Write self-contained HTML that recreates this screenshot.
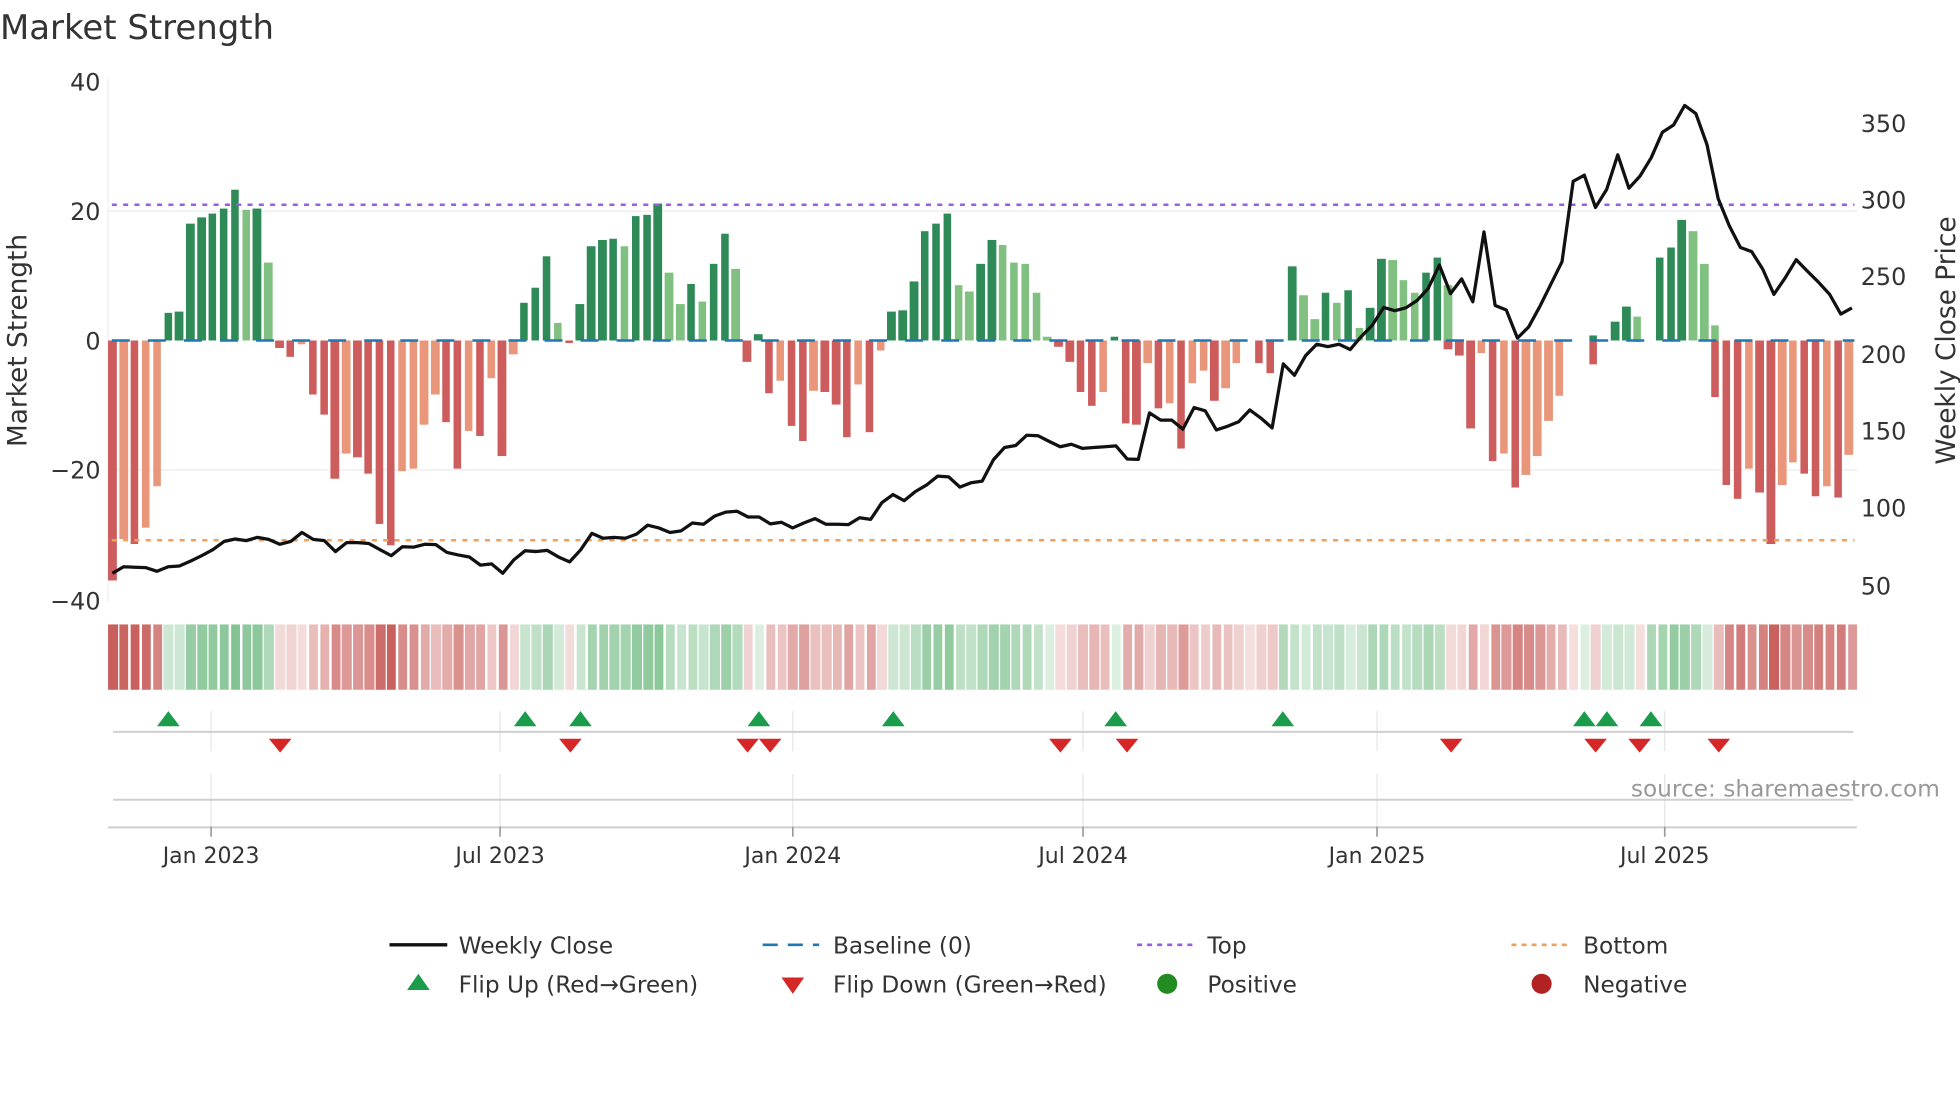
<!DOCTYPE html>
<html><head><meta charset="utf-8"><style>
html,body{margin:0;padding:0;background:#fff;overflow:hidden;width:1960px;height:1102px;}
#w{position:absolute;left:0;top:0;width:1560px;height:877.1px;transform:scale(1.25641);transform-origin:0 0;}
svg{position:absolute;left:0;top:0;font-family:"DejaVu Sans","Liberation Sans",sans-serif;}
.row{position:absolute;left:86.3px;display:flex;gap:2.475px;}
.row i{display:block;width:6.4px;flex:none;}
#top{top:0;height:271px;align-items:flex-end;}
#bot{top:271px;height:210px;align-items:flex-start;}
.a{background:#2e8b57}.b{background:#80c080}.c{background:#cd5c5c}.d{background:#e9967a}
#heat{position:absolute;left:86px;top:497px;height:52px;display:flex;gap:1.375px;}
#heat b{display:block;width:7.5px;height:52px;flex:none;}
.g{background:rgb(95,178,115)}.r{background:rgb(200,95,92)}
</style></head><body><div id="w">
<svg width="1560" height="877.1" viewBox="0 0 1560 877.1" xmlns="http://www.w3.org/2000/svg">
<text x="0" y="31" font-size="27" fill="#333">Market Strength</text>
<line x1="86" y1="168" x2="1478" y2="168" stroke="#ececec" stroke-width="1"/>
<line x1="86" y1="374" x2="1478" y2="374" stroke="#ececec" stroke-width="1"/>
<line x1="86" y1="62" x2="86" y2="480" stroke="#eeeeee" stroke-width="1"/>
<g font-size="19" fill="#333" text-anchor="end">
<text x="80" y="72">40</text><text x="80" y="175">20</text><text x="80" y="278">0</text>
<text x="80" y="381">−20</text><text x="80" y="485">−40</text>
</g>
<g font-size="19" fill="#333">
<text x="1481" y="105">350</text><text x="1481" y="166">300</text><text x="1481" y="227">250</text>
<text x="1481" y="289">200</text><text x="1481" y="350">150</text><text x="1481" y="411">100</text>
<text x="1481" y="473">50</text>
</g>
<text transform="translate(21,271) rotate(-90)" font-size="21" fill="#333" text-anchor="middle">Market Strength</text>
<text transform="translate(1556,271) rotate(-90)" font-size="21" fill="#333" text-anchor="middle">Weekly Close Price</text>
<g stroke="#e6e6e6" stroke-width="1">
<line x1="168" y1="566" x2="168" y2="598"/><line x1="398" y1="566" x2="398" y2="598"/>
<line x1="631" y1="566" x2="631" y2="598"/><line x1="862" y1="566" x2="862" y2="598"/>
<line x1="1096" y1="566" x2="1096" y2="598"/><line x1="1325" y1="566" x2="1325" y2="598"/>
<line x1="168" y1="616" x2="168" y2="658"/><line x1="398" y1="616" x2="398" y2="658"/>
<line x1="631" y1="616" x2="631" y2="658"/><line x1="862" y1="616" x2="862" y2="658"/>
<line x1="1096" y1="616" x2="1096" y2="658"/><line x1="1325" y1="616" x2="1325" y2="658"/>
</g>
<line x1="90" y1="582.5" x2="1475" y2="582.5" stroke="#cfcfcf" stroke-width="1.6"/>
<line x1="90" y1="636.5" x2="1475" y2="636.5" stroke="#cfcfcf" stroke-width="1.6"/>
<line x1="86" y1="658.5" x2="1478" y2="658.5" stroke="#cfcfcf" stroke-width="1.6"/>
<g stroke="#999" stroke-width="1.3">
<line x1="168" y1="658" x2="168" y2="666"/><line x1="398" y1="658" x2="398" y2="666"/>
<line x1="631" y1="658" x2="631" y2="666"/><line x1="862" y1="658" x2="862" y2="666"/>
<line x1="1096" y1="658" x2="1096" y2="666"/><line x1="1325" y1="658" x2="1325" y2="666"/>
</g>
<g fill="#1a9c4a">
<polygon points="125,578 143,578 134,566"/><polygon points="409,578 427,578 418,566"/>
<polygon points="453,578 471,578 462,566"/><polygon points="595,578 613,578 604,566"/>
<polygon points="702,578 720,578 711,566"/><polygon points="879,578 897,578 888,566"/>
<polygon points="1012,578 1030,578 1021,566"/><polygon points="1252,578 1270,578 1261,566"/>
<polygon points="1270,578 1288,578 1279,566"/><polygon points="1305,578 1323,578 1314,566"/>
</g>
<g fill="#d62728">
<polygon points="214,588 232,588 223,599"/><polygon points="445,588 463,588 454,599"/>
<polygon points="586,588 604,588 595,599"/><polygon points="604,588 622,588 613,599"/>
<polygon points="835,588 853,588 844,599"/><polygon points="888,588 906,588 897,599"/>
<polygon points="1146,588 1164,588 1155,599"/><polygon points="1261,588 1279,588 1270,599"/>
<polygon points="1296,588 1314,588 1305,599"/><polygon points="1359,588 1377,588 1368,599"/>
</g>
<text x="1544" y="634" font-size="18.5" fill="#999" text-anchor="end">source: sharemaestro.com</text>
<g font-size="17.5" fill="#333" text-anchor="middle">
<text x="168" y="687">Jan 2023</text><text x="398" y="687">Jul 2023</text><text x="631" y="687">Jan 2024</text>
<text x="862" y="687">Jul 2024</text><text x="1096" y="687">Jan 2025</text><text x="1325" y="687">Jul 2025</text>
</g>
<g font-size="18.5" fill="#333">
<line x1="310" y1="752" x2="356" y2="752" stroke="#111" stroke-width="2.6"/>
<text x="365" y="759">Weekly Close</text>
<line x1="607" y1="752" x2="652" y2="752" stroke="#1f77b4" stroke-width="2" stroke-dasharray="12,8"/>
<text x="663" y="759">Baseline (0)</text>
<line x1="905" y1="752" x2="950" y2="752" stroke="#9b5de5" stroke-width="2" stroke-dasharray="4,4"/>
<text x="961" y="759">Top</text>
<line x1="1203" y1="752" x2="1248" y2="752" stroke="#f0a05a" stroke-width="2" stroke-dasharray="4,4"/>
<text x="1260" y="759">Bottom</text>
<polygon points="324,788 342,788 333,775" fill="#1a9c4a"/>
<text x="365" y="790">Flip Up (Red→Green)</text>
<polygon points="622,778 640,778 631,791" fill="#d62728"/>
<text x="663" y="790">Flip Down (Green→Red)</text>
<circle cx="929" cy="783" r="8" fill="#228b22"/>
<text x="961" y="790">Positive</text>
<circle cx="1227" cy="783" r="8" fill="#b22222"/>
<text x="1260" y="790">Negative</text>
</g>
</svg>
<div class="row" id="top"><i></i><i></i><i></i><i></i><i></i><i class=a style="height:22.1px"></i><i class=a style="height:23.2px"></i><i class=a style="height:92.7px"></i><i class=a style="height:97.9px"></i><i class=a style="height:101.5px"></i><i class=a style="height:105.1px"></i><i class=a style="height:120px"></i><i class=b style="height:104.5px"></i><i class=a style="height:105.1px"></i><i class=b style="height:62.3px"></i><i></i><i></i><i></i><i></i><i></i><i></i><i></i><i></i><i></i><i></i><i></i><i></i><i></i><i></i><i></i><i></i><i></i><i></i><i></i><i></i><i></i><i></i><i class=a style="height:30.4px"></i><i class=a style="height:41.7px"></i><i class=a style="height:67px"></i><i class=b style="height:14.4px"></i><i></i><i class=a style="height:29.4px"></i><i class=a style="height:75.2px"></i><i class=a style="height:79.8px"></i><i class=a style="height:80.9px"></i><i class=b style="height:75.2px"></i><i class=a style="height:98.9px"></i><i class=a style="height:99.9px"></i><i class=a style="height:108.7px"></i><i class=b style="height:53.6px"></i><i class=b style="height:29.4px"></i><i class=a style="height:45.3px"></i><i class=b style="height:31.4px"></i><i class=a style="height:60.8px"></i><i class=a style="height:85px"></i><i class=b style="height:56.7px"></i><i></i><i class=a style="height:4.6px"></i><i></i><i></i><i></i><i></i><i></i><i></i><i></i><i></i><i></i><i></i><i></i><i class=a style="height:23.2px"></i><i class=a style="height:23.7px"></i><i class=a style="height:47.4px"></i><i class=a style="height:87px"></i><i class=a style="height:93.2px"></i><i class=a style="height:101.5px"></i><i class=b style="height:43.8px"></i><i class=b style="height:39.1px"></i><i class=a style="height:61.3px"></i><i class=a style="height:80.3px"></i><i class=b style="height:75.7px"></i><i class=b style="height:62.3px"></i><i class=b style="height:60.8px"></i><i class=b style="height:38.1px"></i><i class=b style="height:3.1px"></i><i></i><i></i><i></i><i></i><i></i><i class=a style="height:2.6px"></i><i></i><i></i><i></i><i></i><i></i><i></i><i></i><i></i><i></i><i></i><i></i><i></i><i></i><i></i><i></i><i class=a style="height:58.7px"></i><i class=b style="height:36.1px"></i><i class=b style="height:17px"></i><i class=a style="height:38.1px"></i><i class=b style="height:30.4px"></i><i class=a style="height:40.2px"></i><i class=b style="height:10.3px"></i><i class=a style="height:25.8px"></i><i class=a style="height:65.4px"></i><i class=b style="height:63.9px"></i><i class=b style="height:47.9px"></i><i class=b style="height:37.6px"></i><i class=a style="height:54.1px"></i><i class=a style="height:66.4px"></i><i class=b style="height:44.3px"></i><i></i><i></i><i></i><i></i><i></i><i></i><i></i><i></i><i></i><i></i><i></i><i></i><i class=a style="height:4.1px"></i><i></i><i class=a style="height:14.9px"></i><i class=a style="height:27.3px"></i><i class=b style="height:19.1px"></i><i></i><i class=a style="height:66.4px"></i><i class=a style="height:73.6px"></i><i class=a style="height:95.8px"></i><i class=b style="height:87px"></i><i class=b style="height:61.3px"></i><i class=b style="height:11.8px"></i><i></i><i></i><i></i><i></i><i></i><i></i><i></i><i></i><i></i><i></i><i></i><i></i><i></i></div>
<div class="row" id="bot"><i class=c style="height:190.6px"></i><i class=d style="height:157.6px"></i><i class=c style="height:162.2px"></i><i class=d style="height:148.8px"></i><i class=d style="height:116.4px"></i><i></i><i></i><i></i><i></i><i></i><i></i><i></i><i></i><i></i><i></i><i class=c style="height:5.7px"></i><i class=c style="height:13.4px"></i><i class=d style="height:3.1px"></i><i class=c style="height:42.7px"></i><i class=c style="height:58.7px"></i><i class=c style="height:109.7px"></i><i class=d style="height:89.6px"></i><i class=c style="height:92.7px"></i><i class=c style="height:105.6px"></i><i class=c style="height:145.7px"></i><i class=c style="height:163.3px"></i><i class=d style="height:104px"></i><i class=d style="height:101.5px"></i><i class=d style="height:67px"></i><i class=d style="height:43.3px"></i><i class=c style="height:65.4px"></i><i class=c style="height:101.5px"></i><i class=d style="height:72.1px"></i><i class=c style="height:75.7px"></i><i class=d style="height:30.4px"></i><i class=c style="height:91.7px"></i><i class=d style="height:11.3px"></i><i></i><i></i><i></i><i></i><i class=c style="height:1.5px"></i><i></i><i></i><i></i><i></i><i></i><i></i><i></i><i></i><i></i><i></i><i></i><i></i><i></i><i></i><i></i><i class=c style="height:17px"></i><i></i><i class=c style="height:41.7px"></i><i class=d style="height:32.4px"></i><i class=c style="height:68px"></i><i class=c style="height:79.8px"></i><i class=d style="height:39.7px"></i><i class=c style="height:41.2px"></i><i class=c style="height:50.5px"></i><i class=c style="height:76.7px"></i><i class=d style="height:34.5px"></i><i class=c style="height:73.1px"></i><i class=d style="height:7.7px"></i><i></i><i></i><i></i><i></i><i></i><i></i><i></i><i></i><i></i><i></i><i></i><i></i><i></i><i></i><i></i><i class=c style="height:4.6px"></i><i class=c style="height:17px"></i><i class=c style="height:40.7px"></i><i class=c style="height:51.5px"></i><i class=d style="height:40.7px"></i><i></i><i class=c style="height:65.9px"></i><i class=c style="height:67px"></i><i class=d style="height:18px"></i><i class=c style="height:54.1px"></i><i class=d style="height:50px"></i><i class=c style="height:86px"></i><i class=d style="height:34px"></i><i class=d style="height:24.2px"></i><i class=c style="height:47.9px"></i><i class=d style="height:37.6px"></i><i class=d style="height:17.5px"></i><i></i><i class=c style="height:18px"></i><i class=c style="height:26.3px"></i><i></i><i></i><i></i><i></i><i></i><i></i><i></i><i></i><i></i><i></i><i></i><i></i><i></i><i></i><i></i><i class=c style="height:6.7px"></i><i class=c style="height:11.8px"></i><i class=c style="height:70px"></i><i class=d style="height:9.8px"></i><i class=c style="height:95.8px"></i><i class=d style="height:90.1px"></i><i class=c style="height:116.9px"></i><i class=d style="height:107.1px"></i><i class=d style="height:91.7px"></i><i class=d style="height:63.9px"></i><i class=d style="height:44.3px"></i><i></i><i></i><i class=c style="height:18.5px"></i><i></i><i></i><i></i><i class=c style="height:0.5px"></i><i></i><i></i><i></i><i></i><i></i><i></i><i class=c style="height:45.3px"></i><i class=c style="height:114.8px"></i><i class=c style="height:125.7px"></i><i class=d style="height:101.5px"></i><i class=c style="height:121px"></i><i class=c style="height:162.2px"></i><i class=d style="height:115.4px"></i><i class=d style="height:96.8px"></i><i class=c style="height:106.1px"></i><i class=c style="height:123.6px"></i><i class=d style="height:116.4px"></i><i class=c style="height:124.6px"></i><i class=d style="height:91.2px"></i></div>
<div id="heat"><b class=r style="opacity:1"></b><b class=r style="opacity:.97"></b><b class=r style="opacity:.99"></b><b class=r style="opacity:.92"></b><b class=r style="opacity:.77"></b><b class=g style="opacity:.31"></b><b class=g style="opacity:.31"></b><b class=g style="opacity:.65"></b><b class=g style="opacity:.68"></b><b class=g style="opacity:.69"></b><b class=g style="opacity:.71"></b><b class=g style="opacity:.78"></b><b class=g style="opacity:.71"></b><b class=g style="opacity:.71"></b><b class=g style="opacity:.5"></b><b class=r style="opacity:.23"></b><b class=r style="opacity:.27"></b><b class=r style="opacity:.22"></b><b class=r style="opacity:.41"></b><b class=r style="opacity:.49"></b><b class=r style="opacity:.73"></b><b class=r style="opacity:.64"></b><b class=r style="opacity:.65"></b><b class=r style="opacity:.71"></b><b class=r style="opacity:.91"></b><b class=r style="opacity:.99"></b><b class=r style="opacity:.71"></b><b class=r style="opacity:.69"></b><b class=r style="opacity:.53"></b><b class=r style="opacity:.41"></b><b class=r style="opacity:.52"></b><b class=r style="opacity:.69"></b><b class=r style="opacity:.55"></b><b class=r style="opacity:.57"></b><b class=r style="opacity:.35"></b><b class=r style="opacity:.65"></b><b class=r style="opacity:.26"></b><b class=g style="opacity:.35"></b><b class=g style="opacity:.4"></b><b class=g style="opacity:.53"></b><b class=g style="opacity:.27"></b><b class=r style="opacity:.21"></b><b class=g style="opacity:.34"></b><b class=g style="opacity:.57"></b><b class=g style="opacity:.59"></b><b class=g style="opacity:.59"></b><b class=g style="opacity:.57"></b><b class=g style="opacity:.68"></b><b class=g style="opacity:.69"></b><b class=g style="opacity:.73"></b><b class=g style="opacity:.46"></b><b class=g style="opacity:.34"></b><b class=g style="opacity:.42"></b><b class=g style="opacity:.35"></b><b class=g style="opacity:.5"></b><b class=g style="opacity:.61"></b><b class=g style="opacity:.48"></b><b class=r style="opacity:.28"></b><b class=g style="opacity:.22"></b><b class=r style="opacity:.4"></b><b class=r style="opacity:.36"></b><b class=r style="opacity:.53"></b><b class=r style="opacity:.59"></b><b class=r style="opacity:.39"></b><b class=r style="opacity:.4"></b><b class=r style="opacity:.45"></b><b class=r style="opacity:.57"></b><b class=r style="opacity:.37"></b><b class=r style="opacity:.56"></b><b class=r style="opacity:.24"></b><b class=g style="opacity:.31"></b><b class=g style="opacity:.32"></b><b class=g style="opacity:.43"></b><b class=g style="opacity:.62"></b><b class=g style="opacity:.65"></b><b class=g style="opacity:.69"></b><b class=g style="opacity:.41"></b><b class=g style="opacity:.39"></b><b class=g style="opacity:.5"></b><b class=g style="opacity:.59"></b><b class=g style="opacity:.57"></b><b class=g style="opacity:.5"></b><b class=g style="opacity:.5"></b><b class=g style="opacity:.39"></b><b class=g style="opacity:.22"></b><b class=r style="opacity:.22"></b><b class=r style="opacity:.28"></b><b class=r style="opacity:.4"></b><b class=r style="opacity:.45"></b><b class=r style="opacity:.4"></b><b class=g style="opacity:.21"></b><b class=r style="opacity:.52"></b><b class=r style="opacity:.53"></b><b class=r style="opacity:.29"></b><b class=r style="opacity:.46"></b><b class=r style="opacity:.44"></b><b class=r style="opacity:.62"></b><b class=r style="opacity:.37"></b><b class=r style="opacity:.32"></b><b class=r style="opacity:.43"></b><b class=r style="opacity:.38"></b><b class=r style="opacity:.29"></b><b class=r style="opacity:.2"></b><b class=r style="opacity:.29"></b><b class=r style="opacity:.33"></b><b class=g style="opacity:.49"></b><b class=g style="opacity:.38"></b><b class=g style="opacity:.28"></b><b class=g style="opacity:.39"></b><b class=g style="opacity:.35"></b><b class=g style="opacity:.4"></b><b class=g style="opacity:.25"></b><b class=g style="opacity:.33"></b><b class=g style="opacity:.52"></b><b class=g style="opacity:.51"></b><b class=g style="opacity:.43"></b><b class=g style="opacity:.38"></b><b class=g style="opacity:.46"></b><b class=g style="opacity:.52"></b><b class=g style="opacity:.42"></b><b class=r style="opacity:.23"></b><b class=r style="opacity:.26"></b><b class=r style="opacity:.54"></b><b class=r style="opacity:.25"></b><b class=r style="opacity:.67"></b><b class=r style="opacity:.64"></b><b class=r style="opacity:.77"></b><b class=r style="opacity:.72"></b><b class=r style="opacity:.65"></b><b class=r style="opacity:.51"></b><b class=r style="opacity:.42"></b><b class=r style="opacity:.2"></b><b class=g style="opacity:.22"></b><b class=r style="opacity:.29"></b><b class=g style="opacity:.27"></b><b class=g style="opacity:.33"></b><b class=g style="opacity:.29"></b><b class=r style="opacity:.2"></b><b class=g style="opacity:.52"></b><b class=g style="opacity:.56"></b><b class=g style="opacity:.67"></b><b class=g style="opacity:.62"></b><b class=g style="opacity:.5"></b><b class=g style="opacity:.26"></b><b class=r style="opacity:.42"></b><b class=r style="opacity:.76"></b><b class=r style="opacity:.81"></b><b class=r style="opacity:.69"></b><b class=r style="opacity:.79"></b><b class=r style="opacity:.99"></b><b class=r style="opacity:.76"></b><b class=r style="opacity:.67"></b><b class=r style="opacity:.72"></b><b class=r style="opacity:.8"></b><b class=r style="opacity:.77"></b><b class=r style="opacity:.81"></b><b class=r style="opacity:.64"></b></div>
<svg width="1560" height="877.1" viewBox="0 0 1560 877.1" xmlns="http://www.w3.org/2000/svg" style="pointer-events:none">
<line x1="89" y1="271" x2="1476" y2="271" stroke="#1f77b4" stroke-width="2" stroke-dasharray="14.3,14.4"/>
<line x1="89" y1="163" x2="1476" y2="163" stroke="#9b5de5" stroke-width="2" stroke-dasharray="4,5"/>
<line x1="89" y1="430" x2="1476" y2="430" stroke="#f0a05a" stroke-width="2" stroke-dasharray="4,5"/>
<polyline transform="translate(89.5,0) scale(8.875,1)" vector-effect="non-scaling-stroke" fill="none" stroke="#111" stroke-width="2.6" stroke-linejoin="round" points="0,456.3 1,451.1 2,451.5 3,451.8 4,454.7 5,451.1 6,450.5 7,446.6 8,442.3 9,437.5 10,431 11,429 12,430.3 13,427.7 14,429.3 15,433.2 16,430.9 17,423.8 18,429.3 19,430.3 20,439 21,431.9 22,431.9 23,432.6 24,437.5 25,442.3 26,435.2 27,435.5 28,433.2 29,433.5 30,439.7 31,441.7 32,443.3 33,449.8 34,448.8 35,456.3 36,445.6 37,438.4 38,439 39,438.1 40,443.3 41,447.2 42,437.5 43,424.5 44,428.4 45,427.7 46,428.4 47,425.1 48,418 49,420.2 50,423.8 51,422.5 52,416.3 53,417.3 54,410.8 55,407.6 56,406.9 57,411.5 58,411.5 59,417 60,415.7 61,420.2 62,416.3 63,412.8 64,417.3 65,417.3 66,417.6 67,412.1 68,413.4 69,400.1 70,393.6 71,398.5 72,391.3 73,386.1 74,379 75,379.6 76,387.7 77,384.2 78,382.9 79,366 80,356.2 81,354.6 82,346.4 83,346.8 84,351.3 85,355.6 86,353.6 87,356.9 88,356.2 89,355.6 90,354.9 91,365.3 92,365.6 93,328.6 94,334.4 95,334.4 96,341.6 97,324.4 98,327 99,342.2 100,339.3 101,335.7 102,326.3 103,332.8 104,340.6 105,289.6 106,298.7 107,283.1 108,274 109,275.9 110,274 111,278.2 112,267.8 113,258.7 114,244.7 115,247.3 116,245 117,239.2 118,229.5 119,210.9 120,233.7 121,222 122,240.2 123,184.6 124,243.1 125,246.7 126,269.1 127,260.3 128,244.1 129,226.2 130,208.3 131,144.3 132,139.4 133,165.1 134,150.8 135,123.2 136,149.8 137,140.1 138,125.5 139,105.3 140,99.5 141,83.9 142,90.4 143,115.1 144,158 145,179.7 146,197 147,200.2 148,214.2 149,234.3 150,221.3 151,206.7 152,215.8 153,224.6 154,234.3 155,250 156,245.1"/>
</svg>
</div></body></html>
